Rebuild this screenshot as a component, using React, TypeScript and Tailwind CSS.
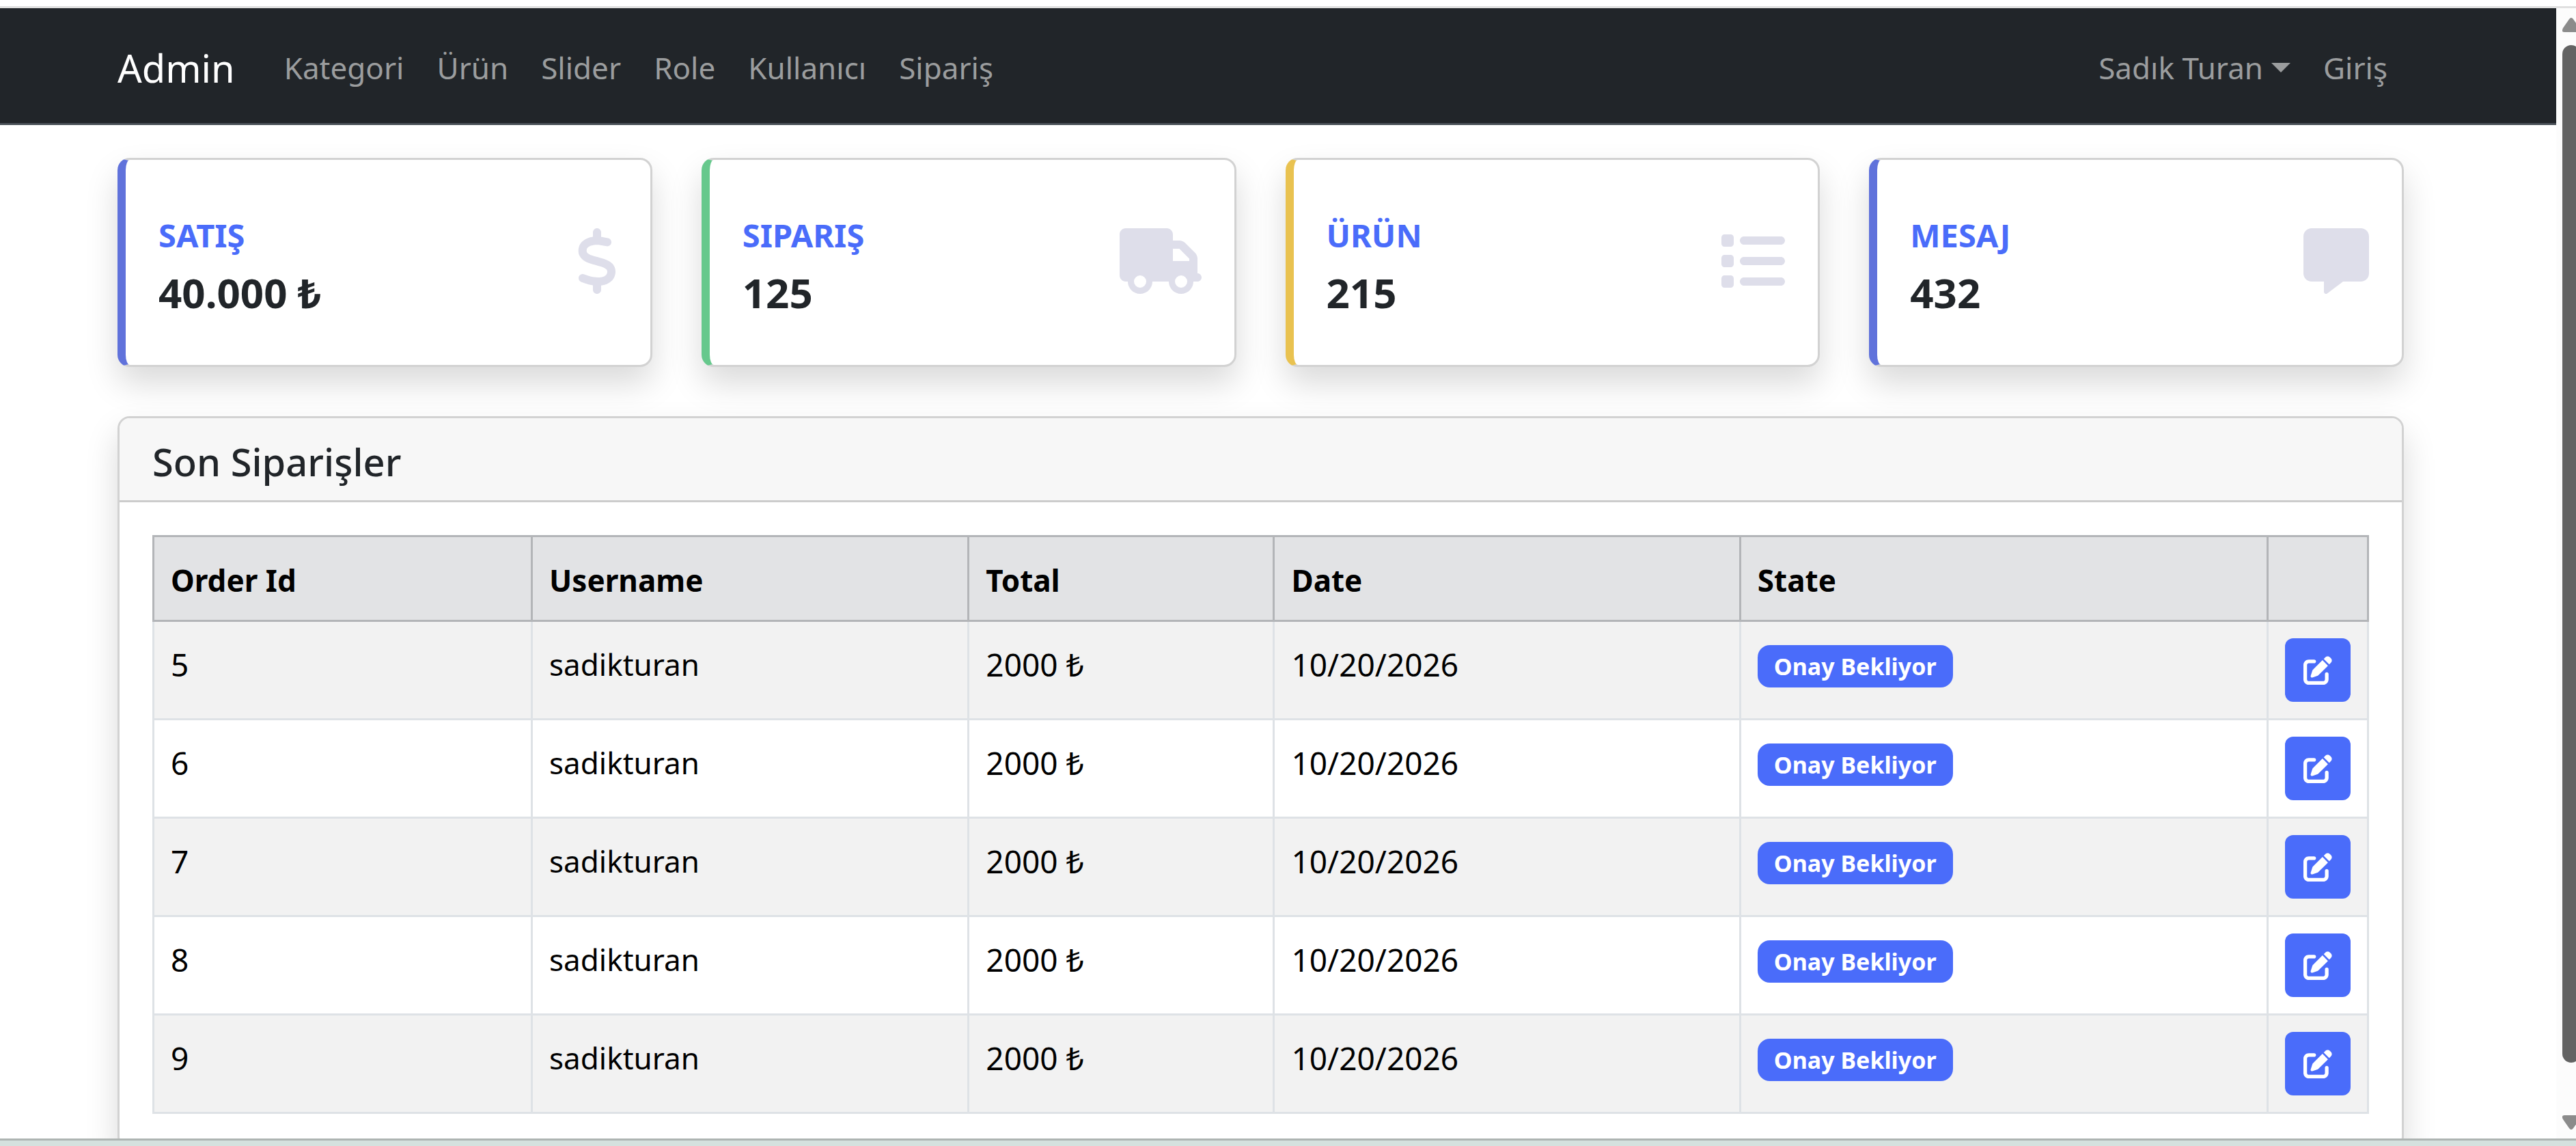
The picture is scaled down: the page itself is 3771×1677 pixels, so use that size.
import React from "react";
import { FaDollarSign, FaTruck, FaList, FaMessage, FaPenToSquare } from "react-icons/fa6";

const navLinks = ["Kategori", "Ürün", "Slider", "Role", "Kullanıcı", "Sipariş"];

const stats = [
  { title: "SATIŞ", value: "40.000 ₺", icon: FaDollarSign, width: "w-[60px]", border: "border-l-[#6072db]" },
  { title: "SIPARIŞ", value: "125", icon: FaTruck, width: "w-[120px]", border: "border-l-[#66c88c]" },
  { title: "ÜRÜN", value: "215", icon: FaList, width: "w-[96px]", border: "border-l-[#e9c250]" },
  { title: "MESAJ", value: "432", icon: FaMessage, width: "w-[96px]", border: "border-l-[#6072db]" },
];

const orders = [5, 6, 7, 8, 9].map((id) => ({
  id,
  username: "sadikturan",
  total: "2000 ₺",
  date: "10/20/2026",
  state: "Onay Bekliyor",
}));

function Navbar() {
  return (
    <nav className="flex h-[171px] shrink-0 items-center border-b-[3px] border-[#495057] bg-[#212529] pt-1.5 pr-[223px] pl-[172px] text-[44px] text-[#9b9d9e]">
      <a href="#" className="mr-[72px] text-[56px] leading-[90px] text-white">Admin</a>
      <ul className="flex gap-12">
        {navLinks.map((label) => (
          <li key={label}>
            <a href="#">{label}</a>
          </li>
        ))}
      </ul>
      <ul className="ml-auto flex gap-12 pr-6">
        <li>
          <button type="button" className="flex items-center">
            Sadık Turan
            <span className="ml-3 border-x-[14px] border-t-[14px] border-x-transparent border-t-[#9b9d9e]" />
          </button>
        </li>
        <li>
          <a href="#">Giriş</a>
        </li>
      </ul>
    </nav>
  );
}

function StatCard({ stat }: { stat: (typeof stats)[number] }) {
  const Icon = stat.icon;
  return (
    <section
      className={`flex h-[306px] items-center justify-between rounded-[18px] border-[3px] border-l-[12px] border-[#d2d2d2] bg-white px-12 shadow-[0_24px_48px_rgba(0,0,0,0.15)] ${stat.border}`}
    >
      <div className="pt-1">
        <h2 className="mb-3 text-[47px] font-bold leading-[72px] text-[#4a6cfa]">{stat.title}</h2>
        <p className="text-[60px] font-bold leading-[72px]">{stat.value}</p>
      </div>
      <Icon className={`mb-1 h-[96px] text-[#dedeea] ${stat.width}`} />
    </section>
  );
}

function OrdersTable() {
  const head = "border-[3px] border-[#b3b5b8] px-6 pt-[26px] pb-[22px] text-left text-[44px] font-bold";
  const cell = "border-[3px] border-[#dee2e6] px-6 pt-[26px] pb-[22px] align-top";
  const controlCell = "border-[3px] border-[#dee2e6] p-6 align-top";
  return (
    <table className="w-full table-fixed border-collapse text-black">
      <colgroup>
        <col className="w-[17.09%]" />
        <col className="w-[19.72%]" />
        <col className="w-[13.79%]" />
        <col className="w-[21.05%]" />
        <col className="w-[23.82%]" />
        <col className="w-[4.53%]" />
      </colgroup>
      <thead className="bg-[#e2e3e5]">
        <tr className="h-[124px]">
          {["Order Id", "Username", "Total", "Date", "State", ""].map((label) => (
            <th key={label} scope="col" className={head}>{label}</th>
          ))}
        </tr>
      </thead>
      <tbody>
        {orders.map((order) => (
          <tr key={order.id} className="h-[144px] odd:bg-[#f2f2f2]">
            <td className={cell}>{order.id}</td>
            <td className={`${cell} text-[44px]`}>{order.username}</td>
            <td className={cell}>{order.total}</td>
            <td className={cell}>{order.date}</td>
            <td className={controlCell}>
              <span className="mt-[10px] inline-block rounded-[18px] bg-[#4a6cfa] px-6 text-[34px] font-bold leading-[62px] text-white">
                {order.state}
              </span>
            </td>
            <td className={controlCell}>
              <button
                type="button"
                aria-label={`Edit order ${order.id}`}
                className="flex h-[93px] w-[96px] items-center justify-center rounded-[12px] bg-[#4a6cfa] text-[42px] text-white"
              >
                <FaPenToSquare />
              </button>
            </td>
          </tr>
        ))}
      </tbody>
    </table>
  );
}

function Scrollbar() {
  return (
    <div aria-hidden="true" className="flex w-[29px] shrink-0 flex-col items-start overflow-hidden bg-[#fcfcfc] pt-[14px] pb-[13px] pl-[9px]">
      <svg viewBox="0 0 26 21" className="h-[21px] w-[26px] shrink-0 fill-[#8b8b8b]">
        <path d="M10 2Q13-2 16 2L25 15Q28 21 23 21H3Q-2 21 1 15Z" />
      </svg>
      <div className="mt-[19px] mb-[77px] w-[26px] flex-1 rounded-full bg-[#636363]" />
      <svg viewBox="0 0 26 21" className="h-[21px] w-[26px] shrink-0 fill-[#8b8b8b]">
        <path d="M10 19Q13 23 16 19L25 6Q28 0 23 0H3Q-2 0 1 6Z" />
      </svg>
    </div>
  );
}

export default function App() {
  return (
    <div className="flex h-screen flex-col overflow-hidden bg-white font-['Noto_Sans','Open_Sans',sans-serif] text-[46px] leading-[72px] text-[#212529]">
      <div className="h-3 shrink-0 border-b-[3px] border-[#e0e0e0]" />
      <div className="flex min-h-0 flex-1">
        <div className="flex min-w-0 flex-1 flex-col overflow-hidden">
          <Navbar />
          <main className="pt-12 pr-[223px] pl-[172px]">
            <div className="mb-[72px] grid grid-cols-4 gap-[72px]">
              {stats.map((stat) => (
                <StatCard key={stat.title} stat={stat} />
              ))}
            </div>
            <section className="rounded-[18px] border-[3px] border-[#d2d2d2] bg-white shadow-[0_24px_48px_rgba(0,0,0,0.15)]">
              <header className="rounded-t-[15px] border-b-[3px] border-[#cccccc] bg-[#f7f7f7] px-12 pt-[27px] pb-[21px]">
                <h1 className="text-[56px] font-medium leading-[72px]">Son Siparişler</h1>
              </header>
              <div className="p-12">
                <OrdersTable />
              </div>
            </section>
          </main>
        </div>
        <Scrollbar />
      </div>
      <div className="h-[11px] shrink-0 border-t-[3px] border-[#aeb4b2] bg-[#d5e1de]" />
    </div>
  );
}
